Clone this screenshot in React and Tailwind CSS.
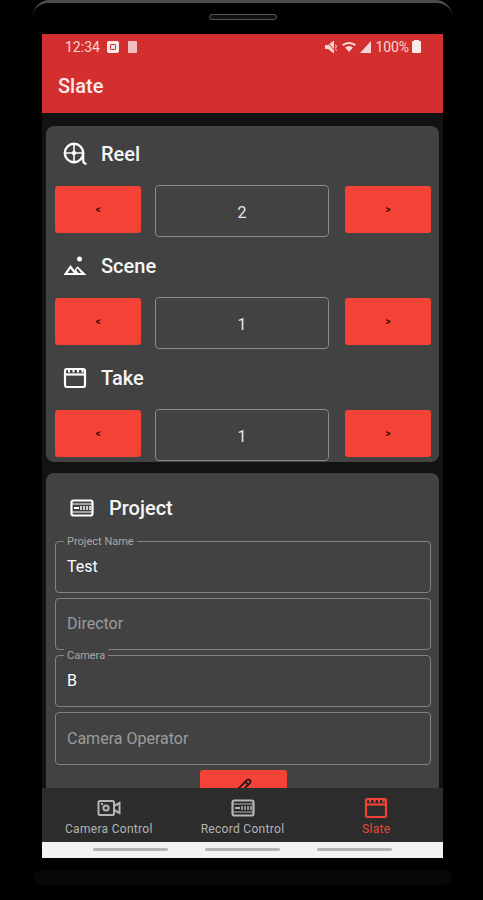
import { Pencil } from "lucide-react";

const ReelIcon = ({ className }) => (
  <svg viewBox="0 0 24 24" className={className} fill="none" stroke="currentColor">
    <circle cx="11" cy="11" r="9.2" strokeWidth="2.400" />
    <path d="M11 3v16M3 11h16" strokeWidth="1.600" />
    <circle cx="11" cy="11" r="2.200" fill="currentColor" stroke="none" />
    <path d="M20.200 11v7.500c0 2 1.100 3.300 3.300 3.300" strokeWidth="2.200" />
  </svg>
);

const SceneIcon = ({ className }) => (
  <svg viewBox="0 0 24 24" className={className} fill="currentColor">
    <circle cx="16.500" cy="5" r="2.500" />
    <path d="M0.500 21 7.500 11l4 5.200 3-4L23.500 21Z" />
    <path d="M4.500 19 7.500 14.700l3.200 4.300Zm10.800 0-2.200-2.900 1.400-1.700 3.700 4.600Z" fill="#424242" />
  </svg>
);

const ClapperIcon = ({ className }) => (
  <svg viewBox="0 0 24 24" className={className} fill="none" stroke="currentColor" strokeWidth="2.200">
    <rect x="2" y="3" width="20" height="18" rx="2" />
    <path d="M2 8.500h20" />
    <path d="M6 3.500v3M10.500 3.500v3M15 3.500v3M19.500 3.500v3" strokeWidth="2" />
  </svg>
);

const RecIcon = ({ className }) => (
  <svg viewBox="0 0 24 24" className={className} fill="none" stroke="currentColor">
    <rect x="1.500" y="4.500" width="21" height="15" rx="2" strokeWidth="2.200" />
    <path d="M2 8h20M2 16h20" strokeWidth="1" />
    <path d="M4 12h5" strokeWidth="2" />
    <path d="M11 10v4M14 10v4M17 10v4M20 10v4" strokeWidth="1.500" />
  </svg>
);

const CameraIcon = ({ className }) => (
  <svg viewBox="0 0 24 24" className={className} fill="none" stroke="currentColor" strokeWidth="2">
    <rect x="1.500" y="5" width="15.500" height="14" rx="1.500" />
    <circle cx="9" cy="12" r="2.600" />
    <path d="M4 8h2" />
    <path d="M17 10l5.500-3v10L17 14" />
  </svg>
);

function Stepper({ value }) {
  return (
    <div className="flex items-start">
      <button className="mt-px flex h-[47px] w-[86px] items-center justify-center rounded-[3px] bg-[#f44336] text-[10px] font-bold text-[#4a0a05]">
        &lt;
      </button>
      <div className="ml-[14px] mr-[16px] flex h-[52px] flex-1 items-center justify-center rounded-[4px] border border-[#8a8a8a] pt-[3px] text-base text-[#e8e8e8]">
        {value}
      </div>
      <button className="mt-px flex h-[47px] w-[86px] items-center justify-center rounded-[3px] bg-[#f44336] text-[10px] font-bold text-[#4a0a05]">
        &gt;
      </button>
    </div>
  );
}

function SectionTitle({ icon: Icon, title }) {
  return (
    <div className="flex h-[60px] items-center pb-[3px]">
      <Icon className="ml-[8px] h-[24px] w-[24px] text-white" />
      <span className="ml-[14px] text-xl font-medium text-[#f5f5f5]">{title}</span>
    </div>
  );
}

function Field({ label, value, placeholder, className = "h-[52px]" }) {
  return (
    <div className={`relative flex items-center rounded-[4px] border border-[#828282] px-[11px] ${className}`}>
      {label && (
        <span className="absolute -top-[7px] left-[8px] bg-[#424242] px-[3px] text-[11px] leading-[13px] text-[#a8a8a8]">
          {label}
        </span>
      )}
      {value ? (
        <span className="text-base text-white">{value}</span>
      ) : (
        <span className="text-base text-[#9c9c9c]">{placeholder}</span>
      )}
    </div>
  );
}

function NavItem({ icon: Icon, label, active }) {
  return (
    <div className={`flex flex-1 flex-col items-center pt-[8px] ${active ? "text-[#f44336]" : "text-[#b4b4b4]"}`}>
      <Icon className="h-[24px] w-[24px]" />
      <span className="mt-[1px] text-xs leading-[16px] tracking-[0.3px]">{label}</span>
    </div>
  );
}

export default function App() {
  return (
    <div
      className="h-[900px] w-[483px] overflow-hidden bg-black"
      style={{ fontFamily: "Roboto, sans-serif" }}
    >
      {/* Phone frame */}
      <div className="ml-[33px] h-[858px] w-[419px] rounded-t-[16px] border-t-[3px] border-[#4a4a4a]">
        <div className="flex h-[31px] justify-center pt-[11px]">
          <div className="h-[6px] w-[68px] rounded-full border border-[#555] bg-[#111]" />
        </div>

        <div className="ml-[9px] flex h-[824px] w-[401px] flex-col bg-[#121212]">
          {/* Status + app bar */}
          <div className="h-[79px] shrink-0 bg-[#d32f2f]">
            <div className="flex h-[26px] items-center pl-[23px] pr-[22px] text-[14px] text-[#f6d5d5]">
              <span>12:34</span>
              <div className="ml-[7px] flex h-[12px] w-[12px] items-center justify-center rounded-[2px] bg-[#fbeaea]">
                <div className="h-[6px] w-[6px] rounded-[1px] border border-[#d32f2f]" />
              </div>
              <div className="ml-[9px] h-[12px] w-[9px] rounded-[1px] bg-[#f2bdbd]" />
              <svg viewBox="0 0 47 14" className="ml-auto h-[14px] w-[47px] text-[#f6d5d5]" fill="currentColor">
                <path d="M0 5h3l6-4.500v13L3 9H0Z" />
                <path d="M1 1l11 12" stroke="#d32f2f" strokeWidth="1" />
                <path d="M10 5l2 1.500-2 1.500M10 9l2 1.500" stroke="currentColor" strokeWidth="1" fill="none" />
                <path d="M17 4.500c4-3.500 10-3.500 14 0l-1.400 1.500c-3.400-2.800-7.800-2.800-11.200 0Zm3 3c2.500-2 5.500-2 8 0L24 12Z" />
                <path d="M35 13 46 1v12Z" />
              </svg>
              <span className="ml-[4px] -tracking-[0.1px]">100%</span>
              <div className="relative ml-[3px] h-[12px] w-[9px] rounded-[1px] bg-[#fbeaea]">
                <div className="absolute -top-[1px] left-[2px] h-[1px] w-[5px] bg-[#fbeaea]" />
              </div>
            </div>
            <div className="pl-[16px] pt-[12px] text-xl font-medium leading-[28px] text-[#fbeaea]">Slate</div>
          </div>

          {/* Scrollable content */}
          <div className="flex min-h-0 flex-1 flex-col gap-[11px] overflow-hidden px-[4px] pt-[13px]">
            <div className="shrink-0 rounded-[8px] bg-[#424242] pb-px pl-[9px] pr-[8px]">
              <div className="flex h-[59px] items-center pb-[3px]">
                <ReelIcon className="ml-[8px] h-[24px] w-[24px] text-white" />
                <span className="ml-[14px] text-xl font-medium text-[#f5f5f5]">Reel</span>
              </div>
              <Stepper value="2" />
              <SectionTitle icon={SceneIcon} title="Scene" />
              <Stepper value="1" />
              <SectionTitle icon={ClapperIcon} title="Take" />
              <Stepper value="1" />
            </div>

            <div className="shrink-0 rounded-[8px] bg-[#424242] pb-[16px] pl-[9px] pr-[8px]">
              <div className="flex h-[68px] items-center pl-[15px] pt-[2px]">
                <RecIcon className="h-[24px] w-[24px] text-white" />
                <span className="ml-[15px] text-xl font-medium text-[#f5f5f5]">Project</span>
              </div>
              <div className="flex flex-col gap-[5px]">
                <Field label="Project Name" value="Test" />
                <Field placeholder="Director" />
                <Field label="Camera" value="B" />
                <Field placeholder="Camera Operator" className="h-[53px]" />
              </div>
              <button className="mx-auto mt-[5px] flex h-[47px] w-[87px] justify-center rounded-[3px] bg-[#f44336] pt-[8px] text-[#111]">
                <Pencil className="h-[18px] w-[18px]" />
              </button>
            </div>
          </div>

          {/* Bottom navigation */}
          <div className="flex h-[54px] shrink-0 bg-[#2c2c2c]">
            <NavItem icon={CameraIcon} label="Camera Control" />
            <NavItem icon={RecIcon} label="Record Control" />
            <NavItem icon={ClapperIcon} label="Slate" active />
          </div>

          {/* System nav strip */}
          <div className="flex h-[16px] shrink-0 items-center justify-center gap-[37px] bg-[#f2f2f2] pb-[1px]">
            <div className="h-[3px] w-[75px] rounded-full bg-[#b5b5b5]" />
            <div className="h-[3px] w-[75px] rounded-full bg-[#b5b5b5]" />
            <div className="h-[3px] w-[75px] rounded-full bg-[#b5b5b5]" />
          </div>
        </div>
      </div>

      {/* Lower phone edge */}
      <div className="ml-[33px] mt-[12px] h-[15px] w-[419px] rounded-[8px] bg-[#070707]" />
    </div>
  );
}
